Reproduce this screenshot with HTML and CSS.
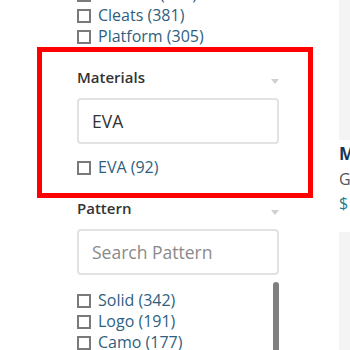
FILE: index.html
```html
<!DOCTYPE html>
<html>
<head>
  <meta charset="UTF-8">
  <title>Filters</title>
  <link rel="stylesheet" href="styles.css">
</head>
<body>
  <div class="page">
    <div class="sidebar">
      <div class="filter-group top-list">
        <ul class="options">
          <li><span class="box"></span>Sandals (412)</li>
          <li><span class="box"></span>Cleats (381)</li>
          <li><span class="box"></span>Platform (305)</li>
        </ul>
      </div>

      <div class="filter-group highlight">
        <div class="filter-head">
          <span class="filter-title">Materials</span>
          <span class="caret"></span>
        </div>
        <input type="text" class="filter-search" value="EVA">
        <ul class="options">
          <li><span class="box"></span>EVA (92)</li>
        </ul>
      </div>

      <div class="filter-group">
        <div class="filter-head">
          <span class="filter-title">Pattern</span>
          <span class="caret"></span>
        </div>
        <input type="text" class="filter-search" placeholder="Search Pattern">
        <div class="scroll-list">
          <ul class="options">
            <li><span class="box"></span>Solid (342)</li>
            <li><span class="box"></span>Logo (191)</li>
            <li><span class="box"></span>Camo (177)</li>
            <li><span class="box"></span>Striped (96)</li>
            <li><span class="box"></span>Floral (54)</li>
          </ul>
          <div class="thumb"></div>
        </div>
      </div>
    </div>

    <div class="products">
      <div class="product">
        <div class="product-img"></div>
        <div class="product-name">Men's Slide Sandal</div>
        <div class="product-brand">Generic</div>
        <div class="product-price">$ 24.99</div>
      </div>
      <div class="product">
        <div class="product-img"></div>
      </div>
    </div>
  </div>
</body>
</html>
```

FILE: styles.css
```css
html, body {
  margin: 0;
  padding: 0;
  overflow: hidden;
  background: #fff;
}

body {
  font-family: "Open Sans", "Noto Sans", Arial, sans-serif;
  color: #333;
}

.page {
  display: flex;
  align-items: flex-start;
  padding-left: 37px;
}

/* 左侧筛选栏 */
.sidebar {
  width: 276px;
  flex-shrink: 0;
}

.filter-group {
  padding: 0 34px 0 40px;
}

.top-list {
  margin-top: -16px;
}

.filter-group.highlight {
  border: 5px solid #ff0000;
  padding: 15px 29px 15px 35px;
}

.filter-head {
  display: flex;
  justify-content: space-between;
  align-items: center;
  height: 21px;
}

.filter-title {
  font-size: 15px;
  font-weight: 600;
  line-height: 21px;
  color: #333;
}

.caret {
  width: 0;
  height: 0;
  margin-top: 8px;
  border-left: 4.5px solid transparent;
  border-right: 4.5px solid transparent;
  border-top: 5px solid #d0d0d0;
}

.filter-search {
  display: block;
  box-sizing: border-box;
  width: 100%;
  height: 46px;
  margin-top: 10px;
  padding: 0 13px;
  border: 2px solid #e2e2e2;
  border-radius: 4px;
  font-family: inherit;
  font-size: 17.5px;
  color: #333;
  outline: none;
}

.filter-search::placeholder {
  color: #8a8a8a;
}

.options {
  list-style: none;
  margin: 0;
  padding: 0;
}

.filter-search + .options {
  margin-top: 7px;
  padding-top: 6px;
}

.options li {
  display: flex;
  align-items: center;
  height: 21px;
  font-size: 16px;
  line-height: 21px;
  color: #2f5f80;
  white-space: nowrap;
}

.box {
  box-sizing: border-box;
  width: 14px;
  height: 14px;
  margin-right: 7px;
  border: 2px solid #7a7a7a;
  flex-shrink: 0;
}

/* 带滚动条的列表 */
.scroll-list {
  display: flex;
  justify-content: space-between;
  align-items: flex-start;
  margin-top: 7px;
}

.scroll-list .options {
  padding-top: 8px;
}

.thumb {
  width: 6px;
  height: 120px;
  background: #808080;
  border-radius: 3px;
  flex-shrink: 0;
}

/* 右侧商品 */
.products {
  margin-left: 26px;
  width: 220px;
  flex-shrink: 0;
}

.product-img {
  height: 140px;
  background: #f4f4f4;
}

.product-name {
  margin-top: 1px;
  font-size: 17px;
  font-weight: 700;
  line-height: 26px;
  color: #17375a;
  white-space: nowrap;
}

.product-brand {
  font-size: 16px;
  line-height: 24px;
  color: #555;
}

.product-price {
  font-size: 16px;
  line-height: 24px;
  color: #1f7a8c;
  margin-bottom: 17px;
}

.product + .product .product-img {
  height: 200px;
}
```
